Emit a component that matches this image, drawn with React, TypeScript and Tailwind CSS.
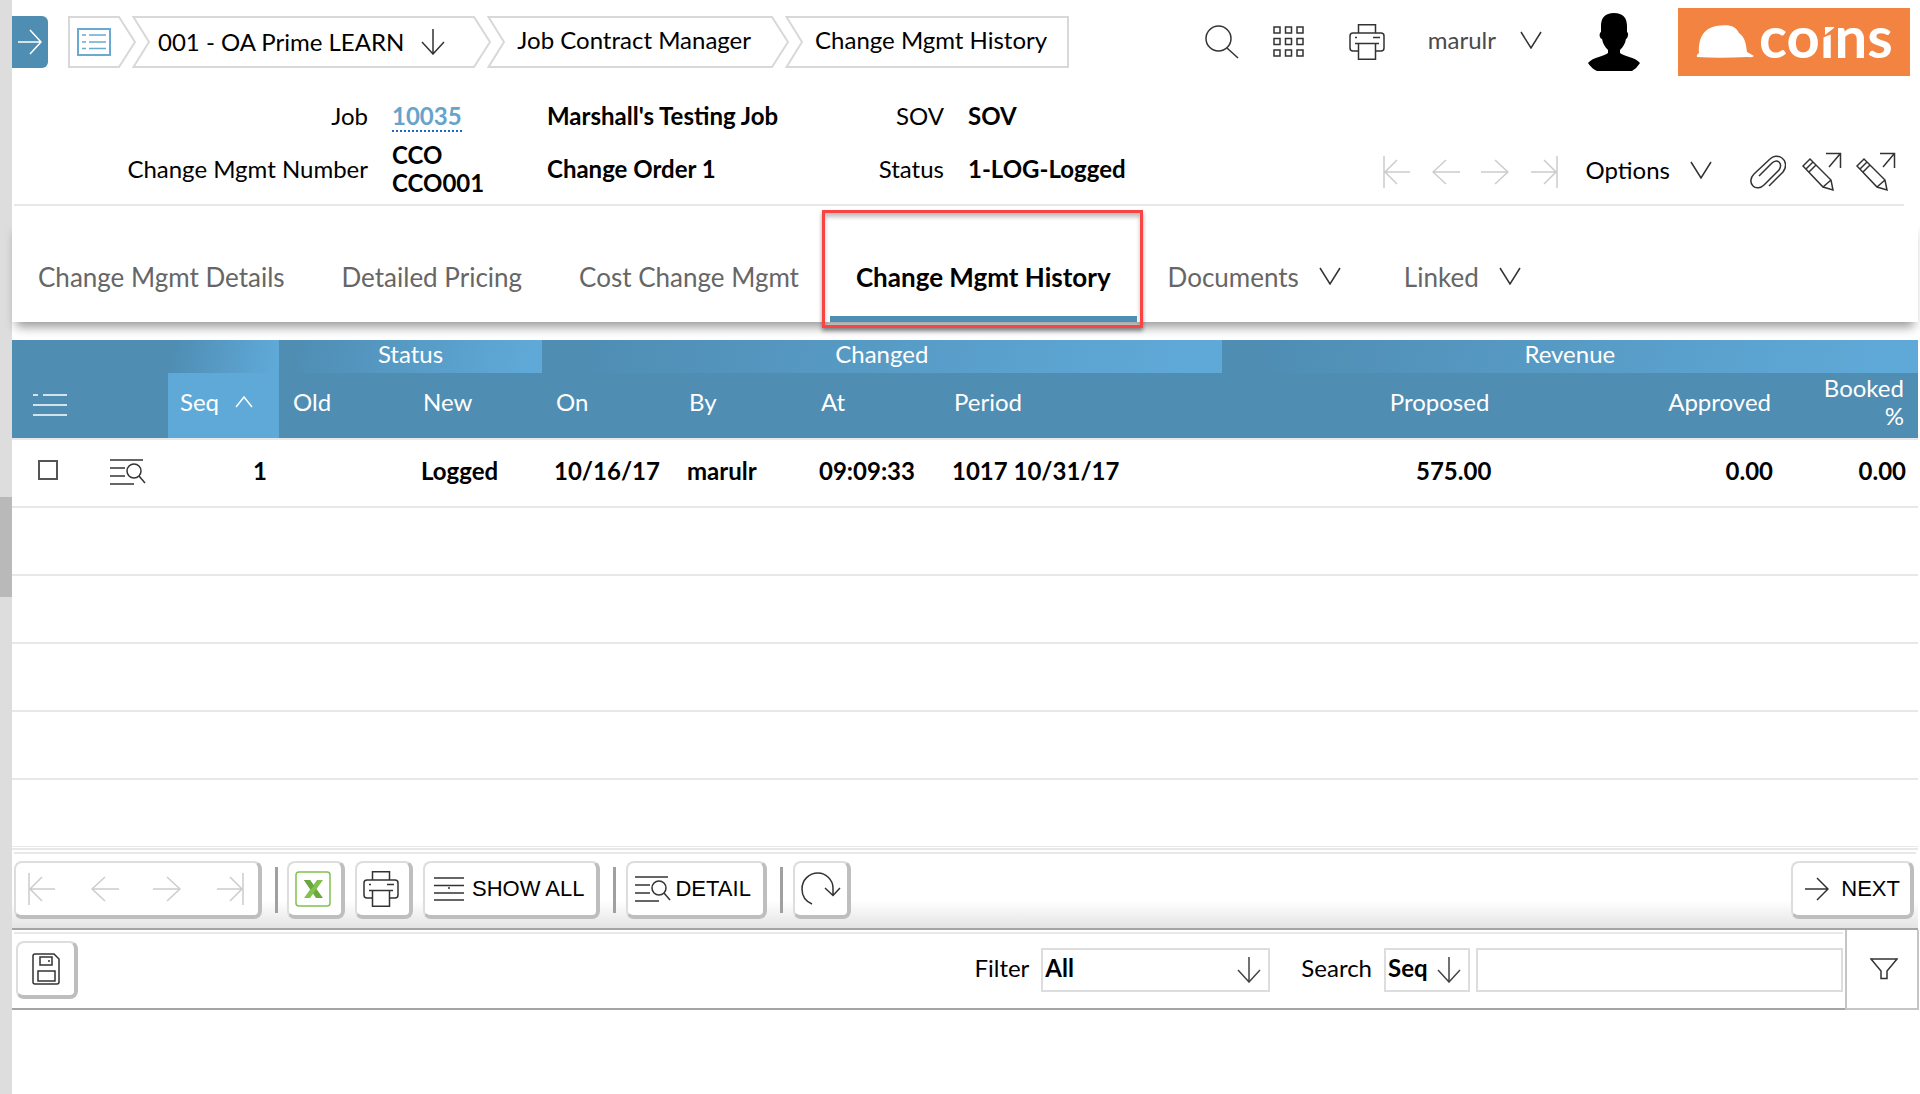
import type { ReactNode } from 'react';

type IconProps = { className?: string };

function Stroke({
  w,
  h,
  className = 'text-[#333]',
  sw = 1.5,
  children,
}: {
  w: number;
  h: number;
  className?: string;
  sw?: number;
  children: ReactNode;
}) {
  return (
    <svg
      width={w}
      height={h}
      viewBox={`0 0 ${w} ${h}`}
      fill="none"
      stroke="currentColor"
      strokeWidth={sw}
      className={`shrink-0 ${className}`}
      aria-hidden="true"
    >
      {children}
    </svg>
  );
}

const ArrowRight = ({ className }: IconProps) => (
  <Stroke w={28} h={26} className={className}>
    <path d="M0 13H27M14 1L27 13L14 25" />
  </Stroke>
);
const ArrowLeft = ({ className }: IconProps) => (
  <Stroke w={28} h={26} className={className}>
    <path d="M28 13H1M14 1L1 13L14 25" />
  </Stroke>
);
const ArrowFirst = ({ className }: IconProps) => (
  <Stroke w={28} h={34} className={className}>
    <path d="M1 1V33M27 17H2M14 5L2 17L14 29" />
  </Stroke>
);
const ArrowLast = ({ className }: IconProps) => (
  <Stroke w={28} h={34} className={className}>
    <path d="M27 1V33M1 17H26M14 5L26 17L14 29" />
  </Stroke>
);
const ArrowDown = ({ className }: IconProps) => (
  <Stroke w={24} h={26} className={className}>
    <path d="M12 0V25M1 13L12 25L23 13" />
  </Stroke>
);
const Chevron = ({ className }: IconProps) => (
  <Stroke w={22} h={18} className={className}>
    <path d="M1 1L11 17L21 1" />
  </Stroke>
);
const Printer = ({ className }: IconProps) => (
  <Stroke w={36} h={36} className={className}>
    <path d="M9.500 9V0.800H26.500V9M9.500 27H4Q1 27 1 24V12Q1 9 4 9H32Q35 9 35 12V24Q35 27 32 27H26.500M6 19.500H30M9.500 19.500V35.200H26.500V19.500M24 13.500H31M6 13.500H8" />
  </Stroke>
);
const DetailIcon = () => (
  <Stroke w={36} h={28}>
    <path d="M0 2H33M0 10H15M0 18H15M0 26H24" />
    <circle cx="24" cy="13" r="7" />
    <path d="M29 18L35 25" />
  </Stroke>
);
const PencilArrow = () => (
  <Stroke w={40} h={40}>
    <path d="M1 14L8 7L29 28L31 38L21 35L1 14ZM21 35L29 28M4 17L11 10M7 20L14 13M27 15L38 2M24 1.500H38.500V16" />
  </Stroke>
);

function CrumbNotch() {
  return (
    <Stroke w={18} h={52} sw={2} className="-ml-1 text-[#d8d8d8]">
      <path d="M18 1H1.500L17 26L1.500 51H18" />
    </Stroke>
  );
}
function CrumbTip() {
  return (
    <Stroke w={18} h={52} sw={2} className="text-[#d8d8d8]">
      <path d="M0 1H1L17 26L1 51H0" />
    </Stroke>
  );
}

function Logo() {
  return (
    <svg
      width="232"
      height="68"
      viewBox="0 0 232 68"
      className="ml-9 shrink-0 overflow-visible"
      role="img"
      aria-label="coins"
    >
      <rect width="232" height="68" fill="#f28340" />
      <path
        d="M19 49Q18 47 21 45C20 30 26 18 43 17.500C53 16.500 58 19 61 25C67 29 68 36 69 44L76 48Q74 50 70 49Q40 50.500 19 49Z"
        fill="#fff"
      />
      <text x="81" y="50" fill="#fff" fontFamily="Lato, sans-serif" fontWeight="700" fontSize="58">
        coins
      </text>
      <path d="M144 4H159V24L144 30Z" fill="#f28340" />
      <path d="M147 19H156V20L147 27Z" fill="#fff" />
    </svg>
  );
}

const raised =
  'flex h-[58px] items-center rounded-lg border-t-2 border-l-2 border-r-4 border-b-4 border-t-[#ddd] border-l-[#ddd] border-r-[#bebebe] border-b-[#bebebe] bg-white';
const thSub = 'px-3.5 pb-2 align-middle font-normal leading-7';
const gradient = 'bg-[linear-gradient(100deg,#4f8db3_5%,#5fa9d8_95%)]';
const Divider = () => <div className="ml-[3px] h-[46px] w-[3px] bg-[#a0a0a0]" />;

function TopBar() {
  return (
    <header className="flex items-start pt-2 pr-2 pb-2">
      <button aria-label="Open menu" className="mt-2 flex h-[52px] w-9 shrink-0 items-center justify-center rounded-r-md bg-[#4f8db3]">
        <Stroke w={24} h={26} className="text-white">
          <path d="M0 13H23M12 1L23 13L12 25" />
        </Stroke>
      </button>
      <nav aria-label="Breadcrumb" className="mt-2 ml-5 flex h-[52px] whitespace-nowrap">
        <button aria-label="Home" className="flex w-[50px] items-center border-y-2 border-l-2 border-[#d8d8d8] pl-[7px]">
          <Stroke w={34} h={28} sw={2} className="text-[#6aa9d0]">
            <path d="M1 1H33V27H1Z" />
            <path strokeWidth="1.500" d="M5 7H9M12 7H29M5 14H9M12 14H29M5 20.500H9M12 20.500H29" />
          </Stroke>
        </button>
        <CrumbTip />
        <CrumbNotch />
        <button className="flex items-center gap-[17px] border-y-2 border-[#d8d8d8] pr-7 pl-2">
          001 - OA Prime LEARN
          <ArrowDown />
        </button>
        <CrumbTip />
        <CrumbNotch />
        <a href="#manager" className="flex items-center border-y-2 border-[#d8d8d8] pr-5 pb-1 pl-3">
          Job Contract Manager
        </a>
        <CrumbTip />
        <CrumbNotch />
        <a href="#history" className="flex items-center border-y-2 border-r-2 border-[#d8d8d8] pr-5 pb-1 pl-3">
          Change Mgmt History
        </a>
      </nav>
      <div className="ml-auto flex h-[68px] items-center">
        <button aria-label="Search">
          <Stroke w={34} h={34}>
            <circle cx="13.500" cy="13.500" r="12.500" />
            <path d="M22 23L33 33" />
          </Stroke>
        </button>
        <button aria-label="Apps" className="ml-[34px]">
          <Stroke w={32} h={32}>
            <path d="M1 1H7V7H1ZM12.500 1H18.500V7H12.500ZM24 1H30V7H24ZM1 12.500H7V18.500H1ZM12.500 12.500H18.500V18.500H12.500ZM24 12.500H30V18.500H24ZM1 24H7V30H1ZM12.500 24H18.500V30H12.500ZM24 24H30V30H24Z" />
          </Stroke>
        </button>
        <button aria-label="Print" className="ml-11">
          <Printer />
        </button>
        <button className="ml-[43px] flex items-center gap-6 pb-1 text-[#4a4a4a]">
          marulr
          <Chevron />
        </button>
        <svg width="54" height="60" viewBox="0 0 54 60" className="mr-px ml-[45px] shrink-0" role="img" aria-label="User picture">
          <path
            d="M27 1C36 1 40 6 40 14V20C42 21 41 26 39 27C38 32 36 35 33 38V41C36 44 48 45 53 51Q50 56 45 59H10Q4 56 1 51C6 45 18 44 21 41V38C18 35 16 32 15 27C12 26 12 21 14 20V14C14 6 18 1 27 1Z"
            fill="#000"
          />
        </svg>
        <Logo />
      </div>
    </header>
  );
}

function JobInfo() {
  return (
    <section className="mr-3.5 ml-0.5 flex items-end border-b-2 border-[#e8e8e8] pt-[18px] pb-[7px]">
      <dl className="-ml-0.5 grid grid-cols-[356px_131px_244px_129px_auto] items-center gap-x-6 gap-y-[11px] leading-7 whitespace-nowrap">
        <dt className="text-right">Job</dt>
        <dd className="font-bold">
          <a href="#job" className="border-b-2 border-dotted border-[#1b69c5] text-[#67a3cb]">
            10035
          </a>
        </dd>
        <dd className="font-bold">Marshall's Testing Job</dd>
        <dt className="text-right">SOV</dt>
        <dd className="font-bold">SOV</dd>
        <dt className="text-right">Change Mgmt Number</dt>
        <dd className="font-bold">
          CCO
          <br />
          CCO001
        </dd>
        <dd className="font-bold">Change Order 1</dd>
        <dt className="text-right">Status</dt>
        <dd className="font-bold">1-LOG-Logged</dd>
      </dl>
      <div className="mb-[5px] ml-auto flex h-10 items-center pr-2">
        <div className="flex items-center gap-[21px] text-[#ccc]">
          <button aria-label="First record"><ArrowFirst className="" /></button>
          <button aria-label="Previous record"><ArrowLeft className="" /></button>
          <button aria-label="Next record"><ArrowRight className="" /></button>
          <button aria-label="Last record"><ArrowLast className="" /></button>
        </div>
        <button className="ml-7 flex items-center gap-5 pb-1">
          Options
          <Chevron />
        </button>
        <button aria-label="Attachments" className="ml-[38px]">
          <Stroke w={36} h={34}>
            <path d="M19 31L33 17C37 12 36 6 32 3C28 0 23 1 20 4L4 19C0 23 0 28 3 31C6 34 11 33 14 30L29 15C31 12 31 9 29 7C27 5.500 24 6 22 8L9 21" />
          </Stroke>
        </button>
        <button aria-label="Edit" className="ml-4"><PencilArrow /></button>
        <button aria-label="Edit all" className="ml-3.5"><PencilArrow /></button>
      </div>
    </section>
  );
}

function Tabs() {
  const tab = 'flex items-center border-b-[6px] border-transparent px-[26px] pt-5';
  return (
    <nav
      aria-label="Sections"
      className="mt-[13px] flex h-[103px] gap-[5px] bg-white text-[26px] whitespace-nowrap text-[#666] shadow-[0_9px_10px_-4px_rgba(0,0,0,0.4)]"
    >
      <a href="#details" className={tab}>Change Mgmt Details</a>
      <a href="#pricing" className={tab}>Detailed Pricing</a>
      <a href="#cost" className={tab}>Cost Change Mgmt</a>
      <a
        href="#history"
        aria-current="page"
        className="relative flex items-center border-b-[6px] border-[#4f8db3] px-[26px] pt-5 font-bold text-black"
      >
        Change Mgmt History
        <span className="pointer-events-none absolute -top-[9px] -right-1.5 -bottom-3 -left-2 border-[3px] border-[#f94444] shadow-[0_3px_4px_rgba(0,0,0,0.4),inset_0_4px_4px_rgba(0,0,0,0.25)]" />
      </a>
      <button className={tab}>
        Documents
        <Chevron className="mr-1.5 mb-1 ml-5 text-[#333]" />
      </button>
      <button className={tab}>
        Linked
        <Chevron className="mb-1 ml-5 text-[#333]" />
      </button>
    </nav>
  );
}

function HistoryTable() {
  return (
    <table className="mt-[18px] w-full table-fixed border-collapse text-left">
      <colgroup>
        <col className="w-[84px]" />
        <col className="w-[72px]" />
        <col className="w-[111px]" />
        <col className="w-[130px]" />
        <col className="w-[133px]" />
        <col className="w-[133px]" />
        <col className="w-[132px]" />
        <col className="w-[133px]" />
        <col />
        <col />
        <col />
        <col className="w-[133px]" />
      </colgroup>
      <thead className="bg-[#4f8db3] text-white">
        <tr className="h-[33px] text-center leading-[26px]">
          <td colSpan={2} />
          <td className={gradient} />
          <th scope="colgroup" colSpan={2} className={`pb-1.5 font-normal ${gradient}`}>Status</th>
          <th scope="colgroup" colSpan={4} className={`pb-1.5 font-normal ${gradient}`}>Changed</th>
          <th scope="colgroup" colSpan={3} className={`pb-1.5 font-normal ${gradient}`}>Revenue</th>
        </tr>
        <tr className="h-[66px]">
          <td colSpan={2} className="pb-0.5 pl-[21px] align-middle">
            <button aria-label="Table options" className="block">
              <Stroke w={34} h={24} className="text-white">
                <path d="M0 2H5M10 2H34M0 12H34M0 22H34" />
              </Stroke>
            </button>
          </td>
          <th scope="col" aria-sort="ascending" className="bg-[#5fa9d8] px-3 pb-2 font-normal">
            <button className="flex items-center gap-4">
              Seq
              <Stroke w={18} h={12} className="text-white">
                <path d="M1 11L9 1L17 11" />
              </Stroke>
            </button>
          </th>
          <th scope="col" className={thSub}>Old</th>
          <th scope="col" className={thSub}>New</th>
          <th scope="col" className={thSub}>On</th>
          <th scope="col" className={thSub}>By</th>
          <th scope="col" className={thSub}>At</th>
          <th scope="col" className={thSub}>Period</th>
          <th scope="col" className={`text-right ${thSub}`}>Proposed</th>
          <th scope="col" className={`text-right ${thSub}`}>Approved</th>
          <th scope="col" className={`text-right ${thSub}`}>Booked %</th>
        </tr>
      </thead>
      <tbody className="border-t-2 border-[#e8e8e8] font-bold">
        <tr className="h-[68px] border-b-2 border-[#e8e8e8]">
          <td className="pb-1.5 pl-[26px]">
            <input type="checkbox" aria-label="Select row 1" className="block size-5 appearance-none border-2 border-[#555] bg-white" />
          </td>
          <td className="pb-0.5">
            <button aria-label="Row detail" className="ml-3.5 block"><DetailIcon /></button>
          </td>
          <td className="px-3 pb-1 text-right">1</td>
          <td />
          <td className="px-3 pb-1">Logged</td>
          <td className="px-3 pb-1">10/16/17</td>
          <td className="px-3 pb-1">marulr</td>
          <td className="px-3 pb-1">09:09:33</td>
          <td className="px-3 pb-1">1017 10/31/17</td>
          <td className="px-3 pb-1 text-right">575.00</td>
          <td className="px-3 pb-1 text-right">0.00</td>
          <td className="px-3 pb-1 text-right">0.00</td>
        </tr>
        {[2, 3, 4, 5, 6].map((n) => (
          <tr key={n} className="h-[68px] border-b-2 border-[#e8e8e8] last:h-[67px] last:border-b">
            <td colSpan={12} />
          </tr>
        ))}
      </tbody>
    </table>
  );
}

function Toolbar() {
  return (
    <div className="mt-px border-t-2 border-b-2 border-t-[#e8e8e8] border-b-[#a5a5a5] bg-[linear-gradient(to_bottom,#fff_65%,#e4e4e4)] px-0.5 pt-0.5 pb-[9px]">
      <div className="flex items-center gap-2.5 border-t-2 border-[#e8e8e8] pt-[7px] pr-0.5 font-['Liberation_Sans',sans-serif] text-[22px]">
        <div className={`${raised} w-[248px] justify-between pr-3.5 pl-3 text-[#ccc]`}>
          <button aria-label="First page"><ArrowFirst className="" /></button>
          <button aria-label="Previous page"><ArrowLeft className="" /></button>
          <button aria-label="Next page"><ArrowRight className="" /></button>
          <button aria-label="Last page"><ArrowLast className="" /></button>
        </div>
        <Divider />
        <button aria-label="Export to Excel" className={`${raised} -ml-px w-[58px] pl-1.5`}>
          <svg width="36" height="36" viewBox="0 0 36 36" className="shrink-0" aria-hidden="true">
            <rect x="1" y="1" width="34" height="34" rx="3" fill="none" stroke="#82c04f" strokeWidth="1.500" />
            <path d="M9 9H15L28 27H21Z" fill="#69a83a" />
            <path d="M22 9H28L15 27H9Z" fill="#82c04f" />
            <path d="M9 9H15L19 15L15.500 18.500Z" fill="#69a83a" />
          </svg>
        </button>
        <button aria-label="Print" className={`${raised} w-[58px] pl-1.5`}><Printer /></button>
        <button className={`${raised} gap-2 pr-3 pl-[9px]`}>
          <Stroke w={30} h={26}>
            <path d="M0 2H30M0 9.500H30M0 17H30M0 24H30M15 11V13" />
          </Stroke>
          SHOW ALL
        </button>
        <Divider />
        <button className={`${raised} gap-1 pr-3 pl-[7px]`}>
          <DetailIcon />
          DETAIL
        </button>
        <Divider />
        <button aria-label="Refresh" className={`${raised} w-[58px] pl-1.5`}>
          <Stroke w={40} h={34}>
            <path d="M11 32C4 29 1 23 1 17C1 8 8 1 17 1C25 1 32 8 32 16V23M24 16L32 23.500L39 16" />
          </Stroke>
        </button>
        <button className={`${raised} ml-auto gap-3 pr-2.5 pl-3`}>
          <Stroke w={24} h={24}>
            <path d="M0 12H23M12 1L23 12L12 23" />
          </Stroke>
          NEXT
        </button>
      </div>
    </div>
  );
}

function FilterBar() {
  return (
    <div className="-mr-px flex h-20">
      <form className="flex-1 border-b-2 border-[#a5a5a5] px-0.5 pt-0.5" onSubmit={(e) => e.preventDefault()}>
        <div className="flex h-full items-center border-t-2 border-[#e8e8e8] pb-0.5">
          <button aria-label="Save" className={`${raised} ml-0.5 w-[62px] justify-center`}>
            <Stroke w={28} h={32}>
              <path d="M3 1H22L27 6V29Q27 31 25 31H3Q1 31 1 29V3Q1 1 3 1ZM8 4H20V12H8ZM6 18H23V28H6ZM17 7V9" />
            </Stroke>
          </button>
          <label htmlFor="filter" className="mr-3 ml-auto pb-1">Filter</label>
          <div className="relative w-[229px]">
            <select id="filter" className="block h-11 w-full appearance-none border-2 border-[#ddd] bg-white pb-1 pl-0.5 font-bold">
              <option>All</option>
            </select>
            <ArrowDown className="pointer-events-none absolute top-[9px] right-[9px] text-[#444]" />
          </div>
          <label htmlFor="searchBy" className="mr-3 ml-[31px] pb-1">Search</label>
          <div className="relative w-[86px]">
            <select id="searchBy" className="block h-11 w-full appearance-none border-2 border-[#ddd] bg-white pb-1 pl-0.5 font-bold">
              <option>Seq</option>
            </select>
            <ArrowDown className="pointer-events-none absolute top-[9px] right-[9px] text-[#444]" />
          </div>
          <input aria-label="Search text" className="ml-1.5 h-11 w-[367px] border-2 border-[#ddd] px-2" />
        </div>
      </form>
      <button aria-label="Filter options" className="flex w-[74px] items-center justify-center border-x-2 border-b-2 border-[#c5c5c5] pl-1">
        <Stroke w={28} h={22}>
          <path d="M1 1H27L17 13V20.500H11V13Z" />
        </Stroke>
      </button>
    </div>
  );
}

export default function App() {
  return (
    <div className="flex min-h-screen bg-white font-['Lato',sans-serif] text-[24px] text-black">
      <div className="flex w-3 shrink-0 flex-col bg-[#ddd]">
        <div className="flex-1" />
        <div className="h-[100px] bg-[#b9b9b9]" />
        <div className="flex-1" />
      </div>
      <main className="min-w-0 flex-1 pr-0.5">
        <TopBar />
        <JobInfo />
        <Tabs />
        <HistoryTable />
        <Toolbar />
        <FilterBar />
      </main>
    </div>
  );
}
